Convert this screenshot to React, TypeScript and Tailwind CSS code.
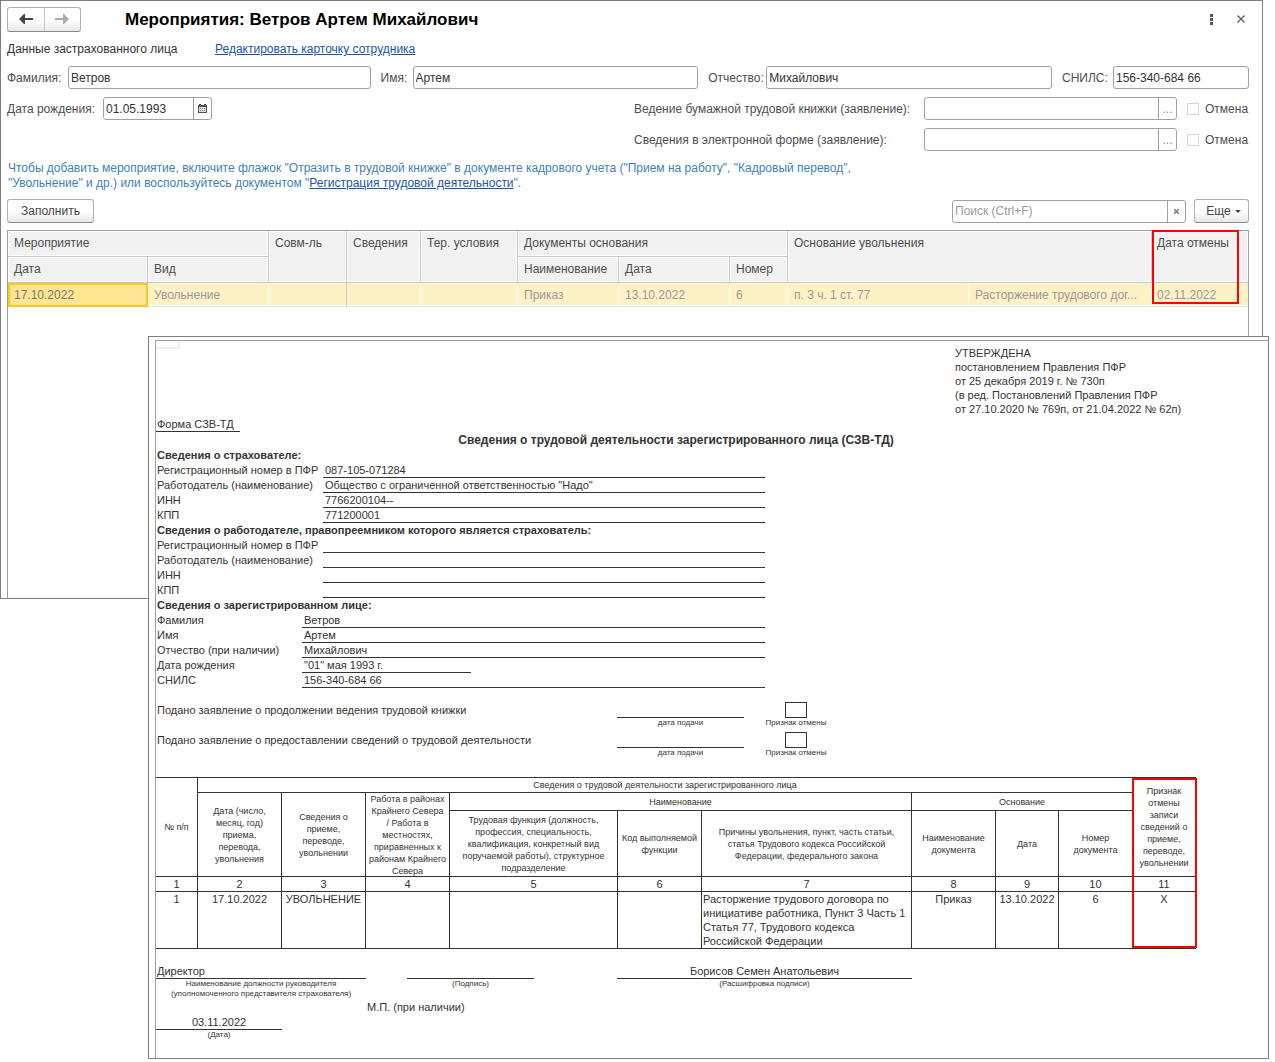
import type { ReactNode } from "react";

const INPUT =
  "h-[23px] w-full min-w-0 rounded-[3px] border border-[#a0a0a0] bg-white px-[2px] text-[#333] outline-none";
const HEAD =
  "border-r border-b border-[#c8c8c8] bg-[#f1f1f1] px-[6px] text-left align-top font-normal leading-6 shadow-[inset_0_0_0_1px_#fff]";
const CELL =
  "border-r border-b border-b-[#e5e5e5] bg-[#fdf1c6] px-[6px] whitespace-nowrap text-[#999] shadow-[inset_0_-1px_0_#fff]";
const BUTTON =
  "h-6 rounded-[3px] border border-[#b0b0b0] border-b-[#8c8c8c] bg-linear-to-b from-white from-50% to-[#e8e8e8] text-[#444]";
const TH = "border-r border-b border-[#333] p-0 font-normal text-[9px] leading-3";
const TD = "border-r border-b border-[#333] p-0 text-center align-top";
const CAPTION = "text-center text-[8px] leading-[10px] whitespace-nowrap";

const EVENT_COLUMNS = [
  "w-[140px]",
  "w-[121px]",
  "w-[78px]",
  "w-[74px]",
  "w-[97px]",
  "w-[101px]",
  "w-[111px]",
  "w-[58px]",
  "w-[181px]",
  "w-auto",
  "w-[96px]",
];

const FORM_COLUMNS = [
  "w-[42px]",
  "w-[84px]",
  "w-[84px]",
  "w-[84px]",
  "w-[168px]",
  "w-[84px]",
  "w-auto",
  "w-[84px]",
  "w-[63px]",
  "w-[74px]",
  "w-[63px]",
];

function Columns({ widths }: { widths: string[] }) {
  return (
    <colgroup>
      {widths.map((w, i) => (
        <col key={i} className={w} />
      ))}
    </colgroup>
  );
}

function CalendarIcon() {
  return (
    <svg width="9" height="9" viewBox="0 0 9 9" shapeRendering="crispEdges">
      <path d="M1 0h2v1h3V0h2v1h1v8H0V1h1z" fill="#555" />
      <path d="M1 3h7v5H1z" fill="#ddd" />
      <path d="M2 4h1v1H2zM4 4h1v1H4zM6 4h1v1H6zM2 6h1v1H2zM4 6h1v1H4zM6 6h1v1H6z" fill="#888" />
    </svg>
  );
}

function Arrow({ color, flip }: { color: string; flip?: boolean }) {
  return (
    <svg
      width="14"
      height="10"
      viewBox="0 0 14 10"
      className={flip ? "-scale-x-100" : ""}
      fill={color}
    >
      <path d="M0 5l5-5h1v4h8v2H6v4H5z" />
    </svg>
  );
}

function Statement({ id, label }: { id: string; label: string }) {
  return (
    <div className="flex items-center gap-[10px]">
      <div className="flex h-[23px] w-[253px] rounded-[3px] border border-[#a0a0a0]">
        <input id={id} className="min-w-0 flex-1 px-[2px] outline-none" />
        <button
          aria-label="Выбрать"
          className="w-[18px] border-l border-[#a0a0a0] text-[#888]"
        >
          ...
        </button>
      </div>
      <label className="flex w-[62px] items-center gap-[6px]">
        <input
          type="checkbox"
          aria-label={`Отмена: ${label}`}
          className="size-3 appearance-none border border-[#d4d4d4]"
        />
        Отмена
      </label>
    </div>
  );
}

function EventsWindow() {
  return (
    <section className="mr-3 flex h-[599px] flex-col border border-[#7f7f7f] pr-[13px] pl-[6px] text-[12px] text-[#4d4d4d]">
      <header className="flex h-9 items-center">
        <div className="flex h-[25px] w-[74px] rounded-[3px] border border-[#b0b0b0] border-b-[#8c8c8c] bg-linear-to-b from-white from-50% to-[#e8e8e8]">
          <button
            aria-label="Назад"
            className="flex flex-1 items-center justify-center border-r border-[#c8c8c8]"
          >
            <Arrow color="#444" />
          </button>
          <button aria-label="Вперед" className="flex flex-1 items-center justify-center">
            <Arrow color="#aaa" flip />
          </button>
        </div>
        <h1 className="ml-11 flex-1 pt-px text-[17px] font-bold text-black">
          Мероприятия: Ветров Артем Михайлович
        </h1>
        <button aria-label="Меню" className="mr-4 flex w-3 justify-center">
          <svg width="3" height="11" fill="#555">
            <path d="M0 0h3v3H0zM0 4h3v3H0zM0 8h3v3H0z" />
          </svg>
        </button>
        <button aria-label="Закрыть" className="flex w-4 justify-center">
          <svg width="8" height="8" stroke="#555" strokeWidth="1.2">
            <path d="M.5.5l7 7M7.5.5l-7 7" />
          </svg>
        </button>
      </header>

      <div className="flex h-6 items-center text-[#333]">
        <span className="w-52">Данные застрахованного лица</span>
        <a href="#card" className="text-[#1a54a8] underline">
          Редактировать карточку сотрудника
        </a>
      </div>

      <div className="mt-[5px] grid grid-cols-[61px_18fr_42px_17fr_68px_17fr_61px_136px] items-center">
        <label htmlFor="surname">Фамилия:</label>
        <input id="surname" defaultValue="Ветров" className={INPUT} />
        <label htmlFor="name" className="pl-[10px]">
          Имя:
        </label>
        <input id="name" defaultValue="Артем" className={INPUT} />
        <label htmlFor="patronymic" className="pl-[10px]">
          Отчество:
        </label>
        <input id="patronymic" defaultValue="Михайлович" className={INPUT} />
        <label htmlFor="snils" className="pl-[10px]">
          СНИЛС:
        </label>
        <input id="snils" defaultValue="156-340-684 66" className={INPUT} />
      </div>

      <div className="mt-2 flex items-center">
        <label htmlFor="birthday" className="w-24">
          Дата рождения:
        </label>
        <div className="flex h-[23px] w-[109px] rounded-[3px] border border-[#a0a0a0]">
          <input
            id="birthday"
            defaultValue="01.05.1993"
            className="min-w-0 flex-1 px-[2px] text-[#333] outline-none"
          />
          <button
            aria-label="Календарь"
            className="flex w-[18px] items-center justify-center border-l border-[#a0a0a0]"
          >
            <CalendarIcon />
          </button>
        </div>
        <label htmlFor="paper" className="ml-auto w-[290px]">
          Ведение бумажной трудовой книжки (заявление):
        </label>
        <Statement id="paper" label="бумажная книжка" />
      </div>
      <div className="mt-2 flex items-center">
        <label htmlFor="digital" className="ml-auto w-[290px]">
          Сведения в электронной форме (заявление):
        </label>
        <Statement id="digital" label="электронная форма" />
      </div>

      <p className="mt-[10px] pl-px leading-[15px] text-[#3f7fb5]">
        Чтобы добавить мероприятие, включите флажок "Отразить в трудовой книжке" в документе
        кадрового учета ("Прием на работу", "Кадровый перевод",
        <br />
        "Увольнение" и др.) или воспользуйтесь документом "
        <a href="#registration" className="text-[#1a54a8] underline">
          Регистрация трудовой деятельности
        </a>
        ".
      </p>

      <div className="mt-2 flex items-center gap-2">
        <button className={`${BUTTON} mr-auto w-[87px]`}>Заполнить</button>
        <div className="flex h-[23px] w-[234px] rounded-[3px] border border-[#a0a0a0]">
          <input
            type="text"
            aria-label="Поиск"
            placeholder="Поиск (Ctrl+F)"
            className="min-w-0 flex-1 px-[2px] outline-none placeholder:text-[#999]"
          />
          <button
            aria-label="Очистить"
            className="flex w-[18px] items-center justify-center border-l border-[#a0a0a0]"
          >
            <svg width="5" height="5" stroke="#777" strokeWidth="1.5">
              <path d="M0 0l5 5M5 0L0 5" />
            </svg>
          </button>
        </div>
        <button className={`${BUTTON} flex w-[55px] items-center justify-center gap-1 pl-1`}>
          Еще
          <svg width="6" height="3" fill="#444">
            <path d="M0 0h6L3 3z" />
          </svg>
        </button>
      </div>

      <div className="mt-[7px] flex-1 border border-b-0 border-[#a0a0a0]">
        <table className="w-full table-fixed border-separate border-spacing-0">
          <Columns widths={EVENT_COLUMNS} />
          <thead>
            <tr className="h-[26px]">
              <th colSpan={2} className={HEAD}>Мероприятие</th>
              <th rowSpan={2} className={HEAD}>Совм-ль</th>
              <th rowSpan={2} className={HEAD}>Сведения</th>
              <th rowSpan={2} className={HEAD}>Тер. условия</th>
              <th colSpan={3} className={HEAD}>Документы основания</th>
              <th colSpan={2} rowSpan={2} className={HEAD}>Основание увольнения</th>
              <th
                rowSpan={2}
                className="relative border-b border-[#c8c8c8] bg-[#f1f1f1] px-[5px] text-left align-top leading-6 font-normal shadow-[inset_0_0_0_1px_#fff]"
              >
                Дата отмены
                <span className="absolute -top-px left-0 z-10 h-[74px] w-[87px] border-2 border-[#f00]" />
              </th>
            </tr>
            <tr className="h-[26px]">
              <th className={HEAD}>Дата</th>
              <th className={HEAD}>Вид</th>
              <th className={HEAD}>Наименование</th>
              <th className={HEAD}>Дата</th>
              <th className={HEAD}>Номер</th>
            </tr>
          </thead>
          <tbody>
            <tr className="h-6">
              <td className="border-2 border-[#f8c823] bg-[#fee591] px-1 text-[#777]">17.10.2022</td>
              <td className={`${CELL} border-r-white`}>Увольнение</td>
              <td className={`${CELL} border-r-[#c8c8c8]`} />
              <td className={`${CELL} border-r-white`} />
              <td className={`${CELL} border-r-white`} />
              <td className={`${CELL} border-r-white`}>Приказ</td>
              <td className={`${CELL} border-r-white`}>13.10.2022</td>
              <td className={`${CELL} border-r-white`}>6</td>
              <td className={`${CELL} border-r-white`}>п. 3 ч. 1 ст. 77</td>
              <td className={`${CELL} border-r-white`}>Расторжение трудового дог...</td>
              <td className="border-b border-[#e5e5e5] bg-[#fdf1c6] px-[5px] text-[#999] shadow-[inset_0_-1px_0_#fff]">
                02.11.2022
              </td>
            </tr>
          </tbody>
        </table>
      </div>
    </section>
  );
}

function Field({
  label,
  value,
  narrow,
  short,
}: {
  label: string;
  value?: string;
  narrow?: boolean;
  short?: boolean;
}) {
  return (
    <div className="flex h-[15px]">
      <dt className={`pl-px whitespace-nowrap ${narrow ? "w-[146px]" : "w-[167px]"}`}>{label}</dt>
      <dd className={`border-b border-[#333] pl-[2px] ${short ? "w-[169px]" : "flex-1"}`}>{value}</dd>
    </div>
  );
}

function Heading({ children }: { children: ReactNode }) {
  return <h3 className="h-[15px] pl-px font-bold">{children}</h3>;
}

function Application({ children }: { children: ReactNode }) {
  return (
    <div className="grid h-[30px] grid-cols-[461px_127px_104px] grid-rows-[15px_15px]">
      <p className="pl-px">{children}</p>
      <div className="border-b border-[#333]" />
      <div className="h-4 w-[22px] self-end justify-self-center border border-[#333]" />
      <p className={`${CAPTION} col-start-2`}>дата подачи</p>
      <p className={CAPTION}>Признак отмены</p>
    </div>
  );
}

function FormWindow() {
  return (
    <section className="relative z-20 -mt-[263px] mr-[6px] ml-[148px] border border-[#7f7f7f] bg-white pt-[3px] pl-[6px] text-[11px] leading-[14px] text-[#333]">
      <div className="border-t border-l border-[#a0a0a0] pr-[72px] pb-[18px]">
        <div className="flex h-[76px] justify-between">
          <div className="h-2 w-6 border-r-2 border-b-2 border-[#f0f0f0]" />
          <p className="w-[241px] pt-[5px] whitespace-nowrap">
            УТВЕРЖДЕНА
            <br />
            постановлением Правления ПФР
            <br />
            от 25 декабря 2019 г. № 730п
            <br />
            (в ред. Постановлений Правления ПФР
            <br />
            от 27.10.2020 № 769п, от 21.04.2022 № 62п)
          </p>
        </div>
        <p className="h-[15px] w-[84px] border-b border-[#333] pl-px">Форма СЗВ-ТД</p>
        <h2 className="h-4 text-center text-[12px] leading-4 font-bold">
          Сведения о трудовой деятельности зарегистрированного лица (СЗВ-ТД)
        </h2>

        <dl className="w-[609px]">
          <Heading>Сведения о страхователе:</Heading>
          <Field label="Регистрационный номер в ПФР" value="087-105-071284" />
          <Field
            label="Работодатель (наименование)"
            value={'Общество с ограниченной ответственностью "Надо"'}
          />
          <Field label="ИНН" value="7766200104--" />
          <Field label="КПП" value="771200001" />
          <Heading>Сведения о работодателе, правопреемником которого является страхователь:</Heading>
          <Field label="Регистрационный номер в ПФР" />
          <Field label="Работодатель (наименование)" />
          <Field label="ИНН" />
          <Field label="КПП" />
          <Heading>Сведения о зарегистрированном лице:</Heading>
          <Field narrow label="Фамилия" value="Ветров" />
          <Field narrow label="Имя" value="Артем" />
          <Field narrow label="Отчество (при наличии)" value="Михайлович" />
          <Field narrow short label="Дата рождения" value={'"01" мая 1993 г.'} />
          <Field narrow label="СНИЛС" value="156-340-684 66" />
        </dl>

        <div className="mt-[15px]">
          <Application>Подано заявление о продолжении ведения трудовой книжки</Application>
          <Application>Подано заявление о предоставлении сведений о трудовой деятельности</Application>
        </div>

        <table className="mt-[14px] w-full table-fixed border-separate border-spacing-0 border-t border-[#333]">
          <Columns widths={FORM_COLUMNS} />
          <thead>
            <tr className="h-[15px]">
              <th rowSpan={3} className={TH}>№ п/п</th>
              <th colSpan={9} className={TH}>
                Сведения о трудовой деятельности зарегистрированного лица
              </th>
              <th rowSpan={3} className={`${TH} relative`}>
                Признак
                <br />
                отмены
                <br />
                записи
                <br />
                сведений о
                <br />
                приеме,
                <br />
                переводе,
                <br />
                увольнении
                <span className="absolute top-0 -left-px h-[170px] w-[65px] border-2 border-[#f00]" />
              </th>
            </tr>
            <tr className="h-[18px]">
              <th rowSpan={2} className={TH}>
                Дата (число,
                <br />
                месяц, год)
                <br />
                приема,
                <br />
                перевода,
                <br />
                увольнения
              </th>
              <th rowSpan={2} className={TH}>
                Сведения о
                <br />
                приеме,
                <br />
                переводе,
                <br />
                увольнении
              </th>
              <th rowSpan={2} className={`${TH} whitespace-nowrap`}>
                <div className="-mb-px">
                  Работа в районах
                  <br />
                  Крайнего Севера
                  <br />
                  / Работа в
                  <br />
                  местностях,
                  <br />
                  приравненных к
                  <br />
                  районам Крайнего
                  <br />
                  Севера
                </div>
              </th>
              <th colSpan={3} className={TH}>Наименование</th>
              <th colSpan={3} className={TH}>Основание</th>
            </tr>
            <tr className="h-[66px]">
              <th className={TH}>
                Трудовая функция (должность,
                <br />
                профессия, специальность,
                <br />
                квалификация, конкретный вид
                <br />
                поручаемой работы), структурное
                <br />
                подразделение
              </th>
              <th className={TH}>
                Код выполняемой
                <br />
                функции
              </th>
              <th className={TH}>
                Причины увольнения, пункт, часть статьи,
                <br />
                статья Трудового кодекса Российской
                <br />
                Федерации, федерального закона
              </th>
              <th className={TH}>
                Наименование
                <br />
                документа
              </th>
              <th className={TH}>Дата</th>
              <th className={TH}>
                Номер
                <br />
                документа
              </th>
            </tr>
          </thead>
          <tbody>
            <tr className="h-[15px]">
              {FORM_COLUMNS.map((_, i) => (
                <td key={i} className={TD}>
                  {i + 1}
                </td>
              ))}
            </tr>
            <tr className="h-[57px]">
              <td className={TD}>1</td>
              <td className={TD}>17.10.2022</td>
              <td className={TD}>УВОЛЬНЕНИЕ</td>
              <td className={TD} />
              <td className={TD} />
              <td className={TD} />
              <td className="border-r border-b border-[#333] p-0 pl-px align-top whitespace-nowrap">
                Расторжение трудового договора по
                <br />
                инициативе работника, Пункт 3 Часть 1
                <br />
                Статья 77, Трудового кодекса
                <br />
                Российской Федерации
              </td>
              <td className={TD}>Приказ</td>
              <td className={TD}>13.10.2022</td>
              <td className={TD}>6</td>
              <td className={TD}>X</td>
            </tr>
          </tbody>
        </table>

        <div className="mt-[15px] grid grid-cols-[210px_127px_295px] grid-rows-[15px_21px] gap-x-[41px]">
          <p className="border-b border-[#333] pl-px">Директор</p>
          <p className="border-b border-[#333]" />
          <p className="ml-[42px] w-[295px] border-b border-[#333] text-center">
            Борисов Семен Анатольевич
          </p>
          <p className={CAPTION}>
            Наименование должности руководителя
            <br />
            (уполномоченного представителя страхователя)
          </p>
          <p className={CAPTION}>(Подпись)</p>
          <p className={`${CAPTION} ml-[42px] w-[295px]`}>(Расшифровка подписи)</p>
        </div>
        <p className="h-[15px] pl-[211px]">М.П. (при наличии)</p>
        <div className="w-[126px] text-center">
          <p className="h-[15px] border-b border-[#333]">03.11.2022</p>
          <p className={CAPTION}>(Дата)</p>
        </div>
      </div>
    </section>
  );
}

export default function App() {
  return (
    <main className="bg-white font-['Liberation_Sans',Arial,sans-serif]">
      <EventsWindow />
      <FormWindow />
    </main>
  );
}
